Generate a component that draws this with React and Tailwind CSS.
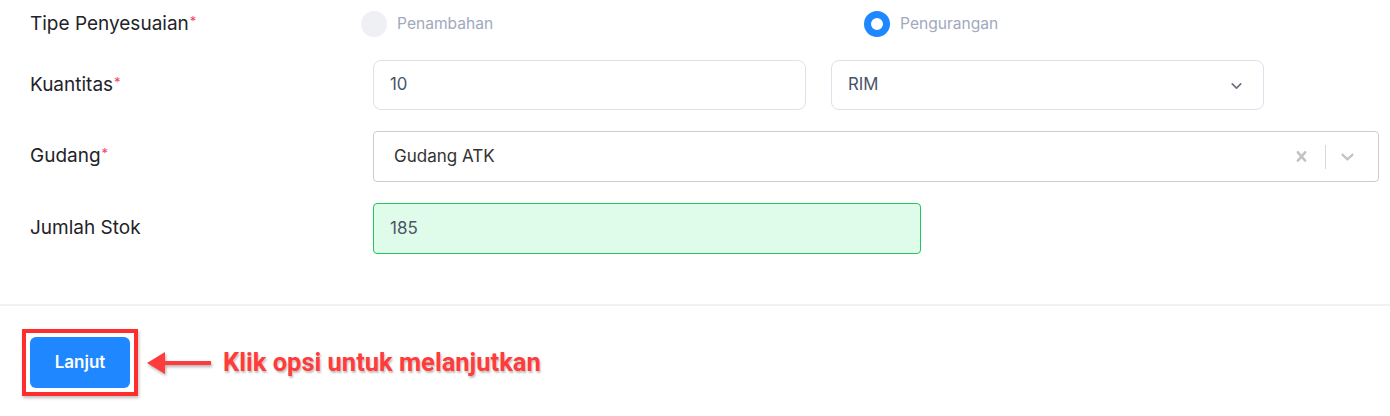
import React from 'react';

const Req = () => <sup className="text-[#f43f5e] text-[13px] ml-[1px] relative -top-[4px]">*</sup>;

function Label({ children, required }) {
  return (
    <div className="w-[343px] shrink-0 text-[19px] text-[#1f2329]">
      {children}
      {required && <Req />}
    </div>
  );
}

function Radio({ checked, label }) {
  return (
    <label className="flex items-center gap-[10px]">
      {checked ? (
        <span className="w-[26px] h-[26px] rounded-full border-[7px] border-[#1f87ff] bg-white" />
      ) : (
        <span className="w-[26px] h-[26px] rounded-full bg-[#eff0f3]" />
      )}
      <span className="text-[15.6px] text-[#a0a9bd]">{label}</span>
    </label>
  );
}

const Chevron = ({ className }) => (
  <svg className={className} width="17" height="17" viewBox="0 0 20 20" fill="none" stroke="currentColor" strokeWidth="2" strokeLinecap="round" strokeLinejoin="round">
    <path d="M5 8l5 5 5-5" />
  </svg>
);

export default function App() {
  return (
    <div className="w-[1390px] h-[416px] bg-white font-['Inter',sans-serif] overflow-hidden">
      <div className="pl-[30px] pr-[11px]">
        {/* Tipe Penyesuaian */}
        <div className="flex items-center h-[48px]">
          <Label required>Tipe Penyesuaian</Label>
          <div className="flex-1 grid grid-cols-2">
            <div className="-ml-[12px]">
              <Radio label="Penambahan" />
            </div>
            <div className="-ml-[12px]">
              <Radio checked label="Pengurangan" />
            </div>
          </div>
        </div>

        {/* Kuantitas */}
        <div className="flex items-center mt-[12px]">
          <Label required>Kuantitas</Label>
          <div className="flex gap-[25px]">
            <div className="w-[433px] h-[50px] rounded-lg border border-[#dde1e9] flex items-center px-4 text-[16.8px] text-[#475467]">
              10
            </div>
            <div className="w-[433px] h-[50px] rounded-lg border border-[#dde1e9] flex items-center justify-between pl-4 pr-[18px] text-[16.8px] text-[#475467]">
              <span>RIM</span>
              <Chevron className="text-[#6b7280]" />
            </div>
          </div>
        </div>

        {/* Gudang */}
        <div className="flex items-center mt-[21px]">
          <Label required>Gudang</Label>
          <div className="flex-1 h-[51px] rounded-[4px] border border-[#cccccc] flex items-center pl-5 text-[17px] text-[#333333]">
            <span className="flex-1">Gudang ATK</span>
            <div className="flex items-center h-full">
              <svg className="text-[#c2c2c2] mr-[13px]" width="21" height="21" viewBox="0 0 20 20" fill="currentColor">
                <path d="M14.348 14.849c-0.469 0.469-1.229 0.469-1.697 0l-2.651-3.030-2.651 3.029c-0.469 0.469-1.229 0.469-1.697 0-0.469-0.469-0.469-1.229 0-1.697l2.758-3.15-2.759-3.152c-0.469-0.469-0.469-1.228 0-1.697s1.228-0.469 1.697 0l2.652 3.031 2.651-3.031c0.469-0.469 1.228-0.469 1.697 0s0.469 1.229 0 1.697l-2.758 3.152 2.758 3.15c0.469 0.469 0.469 1.229 0 1.698z" />
              </svg>
              <span className="w-px h-[24px] bg-[#d9d9d9]" />
              <svg className="text-[#c2c2c2] ml-[11px] mr-[20px]" width="21" height="21" viewBox="0 0 20 20" fill="currentColor">
                <path d="M4.516 7.548c0.436-0.446 1.043-0.481 1.576 0l3.908 3.747 3.908-3.747c0.533-0.481 1.141-0.446 1.574 0 0.436 0.445 0.408 1.197 0 1.615-0.406 0.418-4.695 4.502-4.695 4.502-0.217 0.223-0.502 0.335-0.787 0.335s-0.57-0.112-0.789-0.335c0 0-4.287-4.084-4.695-4.502s-0.436-1.17 0-1.615z" />
              </svg>
            </div>
          </div>
        </div>

        {/* Jumlah Stok */}
        <div className="flex items-center mt-[21px]">
          <Label>Jumlah Stok</Label>
          <div className="w-[548px] h-[51px] rounded-[4px] border border-[#22c55e] bg-[#dffbe9] flex items-center px-4 text-[17px] text-[#4a5568]">
            185
          </div>
        </div>
      </div>

      <div className="mt-[50px] border-t-2 border-[#f1f1f1]" />

      <div className="flex items-center mt-[23px] pl-[22px]">
        <div className="border-4 border-[#ff2e2e] p-[4px] shadow-[1px_2px_3px_rgba(0,0,0,0.25)]">
          <button className="w-[100px] h-[51px] rounded-md bg-[#1f87ff] text-white text-[17px] font-semibold">
            Lanjut
          </button>
        </div>
        <svg className="ml-[8px] drop-shadow-[1px_2px_1.5px_rgba(0,0,0,0.3)]" width="68" height="26" viewBox="0 0 68 26">
          <polygon points="1,13 19,2 19,24" fill="#ff3b3b" />
          <rect x="17" y="11" width="48" height="4" fill="#ff3b3b" />
        </svg>
        <span className="ml-[9px] font-['Roboto',sans-serif] font-bold text-[25.5px] text-[#ff3b3b] [text-shadow:1px_2px_2px_rgba(0,0,0,0.25)]">
          Klik opsi untuk melanjutkan
        </span>
      </div>
    </div>
  );
}
